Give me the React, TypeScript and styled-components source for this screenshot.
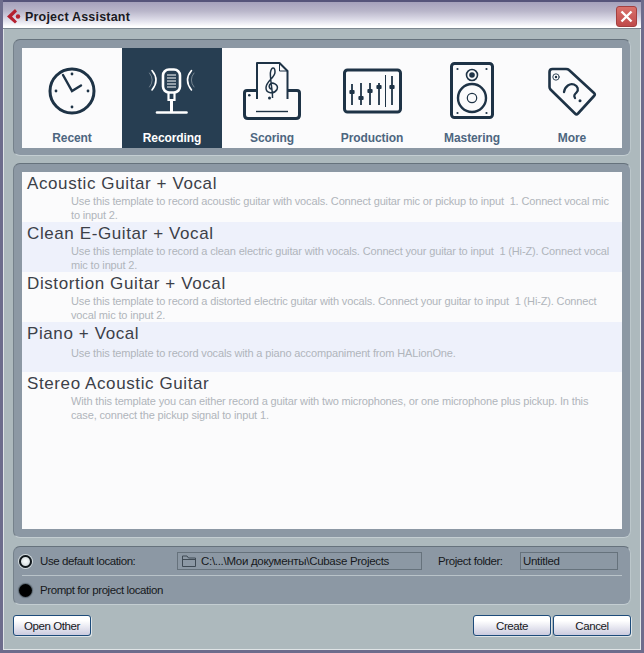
import styled, { createGlobalStyle } from 'styled-components';

const GlobalStyle = createGlobalStyle`
  html, body {
    margin: 0;
    padding: 0;
    background: #adb9bd;
  }
  * {
    box-sizing: border-box;
  }
`;

const Window = styled.div`
  width: 644px;
  height: 653px;
  display: flex;
  flex-direction: column;
  background: #adb9bd;
  border-left: 3px solid #6d6c8c;
  border-right: 3px solid #6d6c8c;
  border-bottom: 3px solid #6d6c8c;
  box-shadow: inset 1px 0 0 #dfe4e6, inset -1px 0 0 #dfe4e6, inset 0 -1px 0 #dfe4e6;
  font-family: 'Liberation Sans', Arial, sans-serif;
  overflow: hidden;
`;

const TitleBar = styled.div`
  height: 29px;
  flex: none;
  margin: 0 -3px;
  padding: 3px 7px 0;
  display: flex;
  align-items: center;
  gap: 3px;
  border-top: 2px solid #55547a;
  border-bottom: 1px solid #7c8790;
  background: linear-gradient(#a5a1bb 0%, #b9b6ca 35%, #dfdeea 70%, #ffffff 95%);
`;

const Title = styled.div`
  flex: 1;
  font-size: 12.5px;
  font-weight: 700;
  letter-spacing: 0.2px;
  color: #1a1a22;
`;

const CloseButton = styled.button`
  width: 21px;
  height: 21px;
  padding: 0;
  display: flex;
  align-items: center;
  justify-content: center;
  border: 1px solid #a33f3f;
  border-radius: 3px;
  background: linear-gradient(#d9716b, #bf4a4a);
`;

const Body = styled.div`
  flex: 1;
  display: flex;
  flex-direction: column;
  padding: 10px 10px 14px;
`;

const Panel = styled.div`
  padding: 8px;
  background: #8c98a4;
  border-radius: 7px;
  border-top: 1px solid #66727c;
  border-left: 1px solid #75818b;
  border-right: 1px solid #bcc7cb;
  border-bottom: 1px solid #c4ced2;
`;

const TabPanel = styled(Panel)`
  padding-bottom: 7px;
`;

const TabStrip = styled.div`
  display: flex;
  height: 100px;
  background: #fbfbfc;
`;

const Tab = styled.div<{ $active?: boolean }>`
  width: 100px;
  height: 100px;
  display: flex;
  flex-direction: column;
  align-items: center;
  background: ${({ $active }) => ($active ? '#273e52' : 'transparent')};
  color: ${({ $active }) => ($active ? '#ffffff' : '#4d6680')};
`;

const TabIcon = styled.svg`
  width: 100px;
  height: 80px;
  flex: none;
`;

const TabLabel = styled.div`
  font-size: 12px;
  font-weight: 700;
  letter-spacing: -0.1px;
  line-height: 20px;
`;

const ListPanel = styled(Panel)`
  flex: 1;
  margin-top: 7px;
`;

const TemplateList = styled.div`
  height: 100%;
  background: #fbfbfc;
`;

const TemplateRow = styled.div<{ $tinted?: boolean }>`
  height: 50px;
  padding: 2px 5px 0;
  background: ${({ $tinted }) => ($tinted ? '#eef1fb' : 'transparent')};
`;

const TemplateName = styled.div`
  font-size: 17px;
  line-height: 19px;
  letter-spacing: 0.6px;
  color: #3c4048;
`;

const TemplateText = styled.div<{ $single?: boolean }>`
  margin: ${({ $single }) => ($single ? '3px' : '1px')} 0 0 44px;
  font-size: 11px;
  line-height: 14px;
  letter-spacing: -0.15px;
  color: #b0b5bb;
  white-space: pre;
`;

const LocationPanel = styled(Panel)`
  flex: none;
  height: 59px;
  margin-top: 8px;
  padding: 0 8px;
`;

const LocationRow = styled.div`
  height: 28px;
  display: flex;
  align-items: center;
  font-size: 11.5px;
  letter-spacing: -0.42px;
  color: #16181c;
`;

const Separator = styled.div`
  height: 1px;
  background: #b9c3c9;
`;

const RadioOn = styled.span`
  width: 13px;
  height: 13px;
  flex: none;
  margin: 0 8px 0 -3px;
  border-radius: 50%;
  background: radial-gradient(circle at 50% 45%, #f2f6f6 20%, #c4ced2 100%);
  border: 2px solid #11171b;
  box-shadow: 0 0 0 1px #d4dcdf;
`;

const RadioOff = styled.span`
  width: 13px;
  height: 13px;
  flex: none;
  margin: 0 8px 0 -3px;
  border-radius: 50%;
  background: #000000;
  box-shadow: 0 0 1px 1px #5a6670;
`;

const DefaultLabel = styled.span`
  width: 137px;
  flex: none;
`;

const Field = styled.div<{ $width: number }>`
  width: ${({ $width }) => $width}px;
  height: 18px;
  flex: none;
  display: flex;
  align-items: center;
  gap: 4px;
  padding: 0 2px;
  border: 1px solid #66727c;
  letter-spacing: -0.3px;
  white-space: nowrap;
  overflow: hidden;
`;

const FolderLabel = styled.span`
  width: 82px;
  margin-left: 16px;
  flex: none;
`;

const FolderIcon = styled.svg`
  width: 16px;
  height: 14px;
  margin-left: 1px;
  flex: none;
`;

const Footer = styled.div`
  display: flex;
  gap: 2px;
  margin-top: 10px;
`;

const Spacer = styled.div`
  flex: 1;
`;

const PushButton = styled.button`
  width: 78px;
  height: 21px;
  padding: 0;
  border: 1px solid #1d4b7a;
  border-radius: 3px;
  background: linear-gradient(#ffffff 25%, #cbcbdf 100%);
  box-shadow: 1px 1px 0 #dfe4e6;
  font-family: 'Liberation Sans', Arial, sans-serif;
  font-size: 11.5px;
  letter-spacing: -0.42px;
  color: #16181c;
`;

const templates = [
  {
    name: 'Acoustic Guitar + Vocal',
    text: 'Use this template to record acoustic guitar with vocals. Connect guitar mic or pickup to input  1. Connect vocal mic\nto input 2.',
  },
  {
    name: 'Clean E-Guitar + Vocal',
    text: 'Use this template to record a clean electric guitar with vocals. Connect your guitar to input  1 (Hi-Z). Connect vocal\nmic to input 2.',
  },
  {
    name: 'Distortion Guitar + Vocal',
    text: 'Use this template to record a distorted electric guitar with vocals. Connect your guitar to input  1 (Hi-Z). Connect\nvocal mic to input 2.',
  },
  {
    name: 'Piano + Vocal',
    text: 'Use this template to record vocals with a piano accompaniment from HALionOne.',
    single: true,
  },
  {
    name: 'Stereo Acoustic Guitar',
    text: 'With this template you can either record a guitar with two microphones, or one microphone plus pickup. In this\ncase, connect the pickup signal to input 1.',
  },
];

const RecentIcon = () => (
  <g fill="none" stroke="#1e3346" strokeLinecap="round">
    <circle cx="50" cy="43" r="22" strokeWidth="3" />
    <path d="M41 27 L50 43 L59 37.5" strokeWidth="2.4" />
    <g fill="#1e3346" stroke="none">
      <circle cx="50" cy="26" r="1.4" />
      <circle cx="66" cy="43" r="1.4" />
      <circle cx="50" cy="59" r="1.4" />
      <circle cx="34" cy="43" r="1.4" />
    </g>
  </g>
);

const RecordingIcon = () => (
  <g fill="none" stroke="#ffffff" strokeLinecap="round">
    <rect x="41" y="21.5" width="17" height="23" rx="6" strokeWidth="2.6" />
    <path d="M45 27 H54 M45 30 H54 M45 33 H54 M45 36 H54 M45 39 H54" strokeWidth="1" strokeLinecap="butt" />
    <path d="M46.5 45 V52 H52.5 V45" strokeWidth="2.2" strokeLinecap="butt" />
    <path d="M49.5 52 V64" strokeWidth="3" strokeLinecap="butt" />
    <path d="M35 64.5 H64.5" strokeWidth="2.6" />
    <path d="M30 22.5 Q38 32 30 42" strokeWidth="1.6" />
    <path d="M27.5 25 Q33 32 27.5 39" strokeWidth="0.8" opacity="0.45" />
    <path d="M69.5 22.5 Q61.5 32 69.5 42" strokeWidth="1.6" />
    <path d="M72 25 Q66.5 32 72 39" strokeWidth="0.8" opacity="0.45" />
  </g>
);

const ScoringIcon = () => (
  <g fill="none" stroke="#1e3346" strokeLinejoin="round">
    <path d="M35 51 V15 H57.5 L65.5 23 V51" strokeWidth="2" />
    <path d="M57.5 15 V23 H65.5" strokeWidth="1" />
    <path
      d="M50.5 50 C51 45 47.5 28 48.5 24 C49.5 18.5 53 18.5 53 24 C53 30 44 33 44 40 C44 45.5 52 46.5 55 41.5 C57 36.5 50 33 47.5 37 C46.5 39 48 41 49.5 41"
      strokeWidth="1.5"
    />
    <circle cx="47.5" cy="50" r="1.5" fill="#1e3346" stroke="none" />
    <path d="M34 42.5 H25 Q22.5 42.5 22.5 45 V67 Q22.5 70.5 26 70.5 H74 Q77.5 70.5 77.5 67 V45 Q77.5 42.5 75 42.5 H65" strokeWidth="3" />
    <path d="M34 63.5 H66" strokeWidth="1.4" />
    <circle cx="27.3" cy="47.3" r="1.3" fill="#1e3346" stroke="none" />
  </g>
);

const faders = [
  { x: 30, knob: 44, top: 36 },
  { x: 39, knob: 50, top: 35 },
  { x: 48, knob: 43, top: 35 },
  { x: 57, knob: 39, top: 35 },
  { x: 70, knob: 39, top: 28 },
];

const ProductionIcon = () => (
  <g fill="none" stroke="#1e3346">
    <rect x="22.5" y="22" width="56" height="42" rx="3" strokeWidth="3" />
    <path d="M63.5 27 V59" strokeWidth="1" />
    {faders.map((f) => (
      <g key={f.x}>
        <path d={`M${f.x} ${f.top} V57`} strokeWidth="1.8" />
        <rect x={f.x - 2.6} y={f.knob - 2} width="5.2" height="4" fill="#1e3346" stroke="none" rx="1" />
      </g>
    ))}
  </g>
);

const MasteringIcon = () => (
  <g fill="none" stroke="#1e3346">
    <rect x="29.5" y="15.5" width="41" height="54" rx="3" strokeWidth="3" />
    <circle cx="50" cy="27" r="5.5" strokeWidth="1.6" />
    <circle cx="50" cy="27" r="2.8" fill="#1e3346" stroke="none" />
    <circle cx="50" cy="50" r="14" strokeWidth="2.4" />
    <circle cx="50" cy="50" r="4.7" strokeWidth="1.2" />
    <g fill="#1e3346" stroke="none">
      <circle cx="35.5" cy="21" r="1.1" />
      <circle cx="64.5" cy="21" r="1.1" />
      <circle cx="35.5" cy="65" r="1.1" />
      <circle cx="64.5" cy="65" r="1.1" />
    </g>
  </g>
);

const MoreIcon = () => (
  <g fill="none" stroke="#1e3346" strokeLinecap="round" strokeLinejoin="round">
    <path d="M30.5 21 H44 Q46 21 47 22 L72 45 Q73.5 46.5 72 48 L56 65.5 Q54.5 67 53 65.5 L28.5 41.5 Q27.5 40.5 27.5 39 V24 Q27.5 21 30.5 21 Z" strokeWidth="2.6" />
    <circle cx="34" cy="29" r="3.2" strokeWidth="0.9" />
    <circle cx="34" cy="29" r="1.2" fill="#1e3346" stroke="none" />
    <path d="M42 44 C43 38 48 35 52 36.5 C56 38 57 42 54.5 44.5 C52.5 46.5 51.5 47.5 53 50" strokeWidth="2.3" />
    <circle cx="58" cy="52.7" r="1.5" fill="#1e3346" stroke="none" />
  </g>
);

const tabs = [
  { label: 'Recent', icon: <RecentIcon /> },
  { label: 'Recording', icon: <RecordingIcon />, active: true },
  { label: 'Scoring', icon: <ScoringIcon /> },
  { label: 'Production', icon: <ProductionIcon /> },
  { label: 'Mastering', icon: <MasteringIcon /> },
  { label: 'More', icon: <MoreIcon /> },
];

export default function App() {
  return (
    <>
      <GlobalStyle />
      <Window>
        <TitleBar>
          <svg width="15" height="15" viewBox="0 0 15 15">
            <path d="M8 0 L0 7.5 L8 14.5 L10 12.5 L5 7.5 L10 2.5 Z" fill="#b5202f" />
            <circle cx="11" cy="7.5" r="2.2" fill="#b5202f" />
          </svg>
          <Title>Project Assistant</Title>
          <CloseButton aria-label="Close">
            <svg width="13" height="13" viewBox="0 0 13 13">
              <path d="M1.5 1.5 L11.5 11.5 M11.5 1.5 L1.5 11.5" stroke="#ffffff" strokeWidth="2.4" />
            </svg>
          </CloseButton>
        </TitleBar>
        <Body>
          <TabPanel>
            <TabStrip>
              {tabs.map((tab) => (
                <Tab key={tab.label} $active={tab.active}>
                  <TabIcon viewBox="0 0 100 80">{tab.icon}</TabIcon>
                  <TabLabel>{tab.label}</TabLabel>
                </Tab>
              ))}
            </TabStrip>
          </TabPanel>
          <ListPanel>
            <TemplateList>
              {templates.map((t, i) => (
                <TemplateRow key={t.name} $tinted={i % 2 === 1}>
                  <TemplateName>{t.name}</TemplateName>
                  <TemplateText $single={t.single}>{t.text}</TemplateText>
                </TemplateRow>
              ))}
            </TemplateList>
          </ListPanel>
          <LocationPanel>
            <LocationRow>
              <RadioOn />
              <DefaultLabel>Use default location:</DefaultLabel>
              <Field $width={245}>
                <FolderIcon viewBox="0 0 16 14">
                  <path d="M1.5 12.5 V2 H6 L7.5 4 H14.5 V12.5 Z M1.5 5.5 H14.5" fill="none" stroke="#3f4a54" strokeWidth="1" />
                </FolderIcon>
                C:\...\Мои документы\Cubase Projects
              </Field>
              <FolderLabel>Project folder:</FolderLabel>
              <Field $width={98}>Untitled</Field>
            </LocationRow>
            <Separator />
            <LocationRow>
              <RadioOff />
              Prompt for project location
            </LocationRow>
          </LocationPanel>
          <Footer>
            <PushButton>Open Other</PushButton>
            <Spacer />
            <PushButton>Create</PushButton>
            <PushButton>Cancel</PushButton>
          </Footer>
        </Body>
      </Window>
    </>
  );
}
